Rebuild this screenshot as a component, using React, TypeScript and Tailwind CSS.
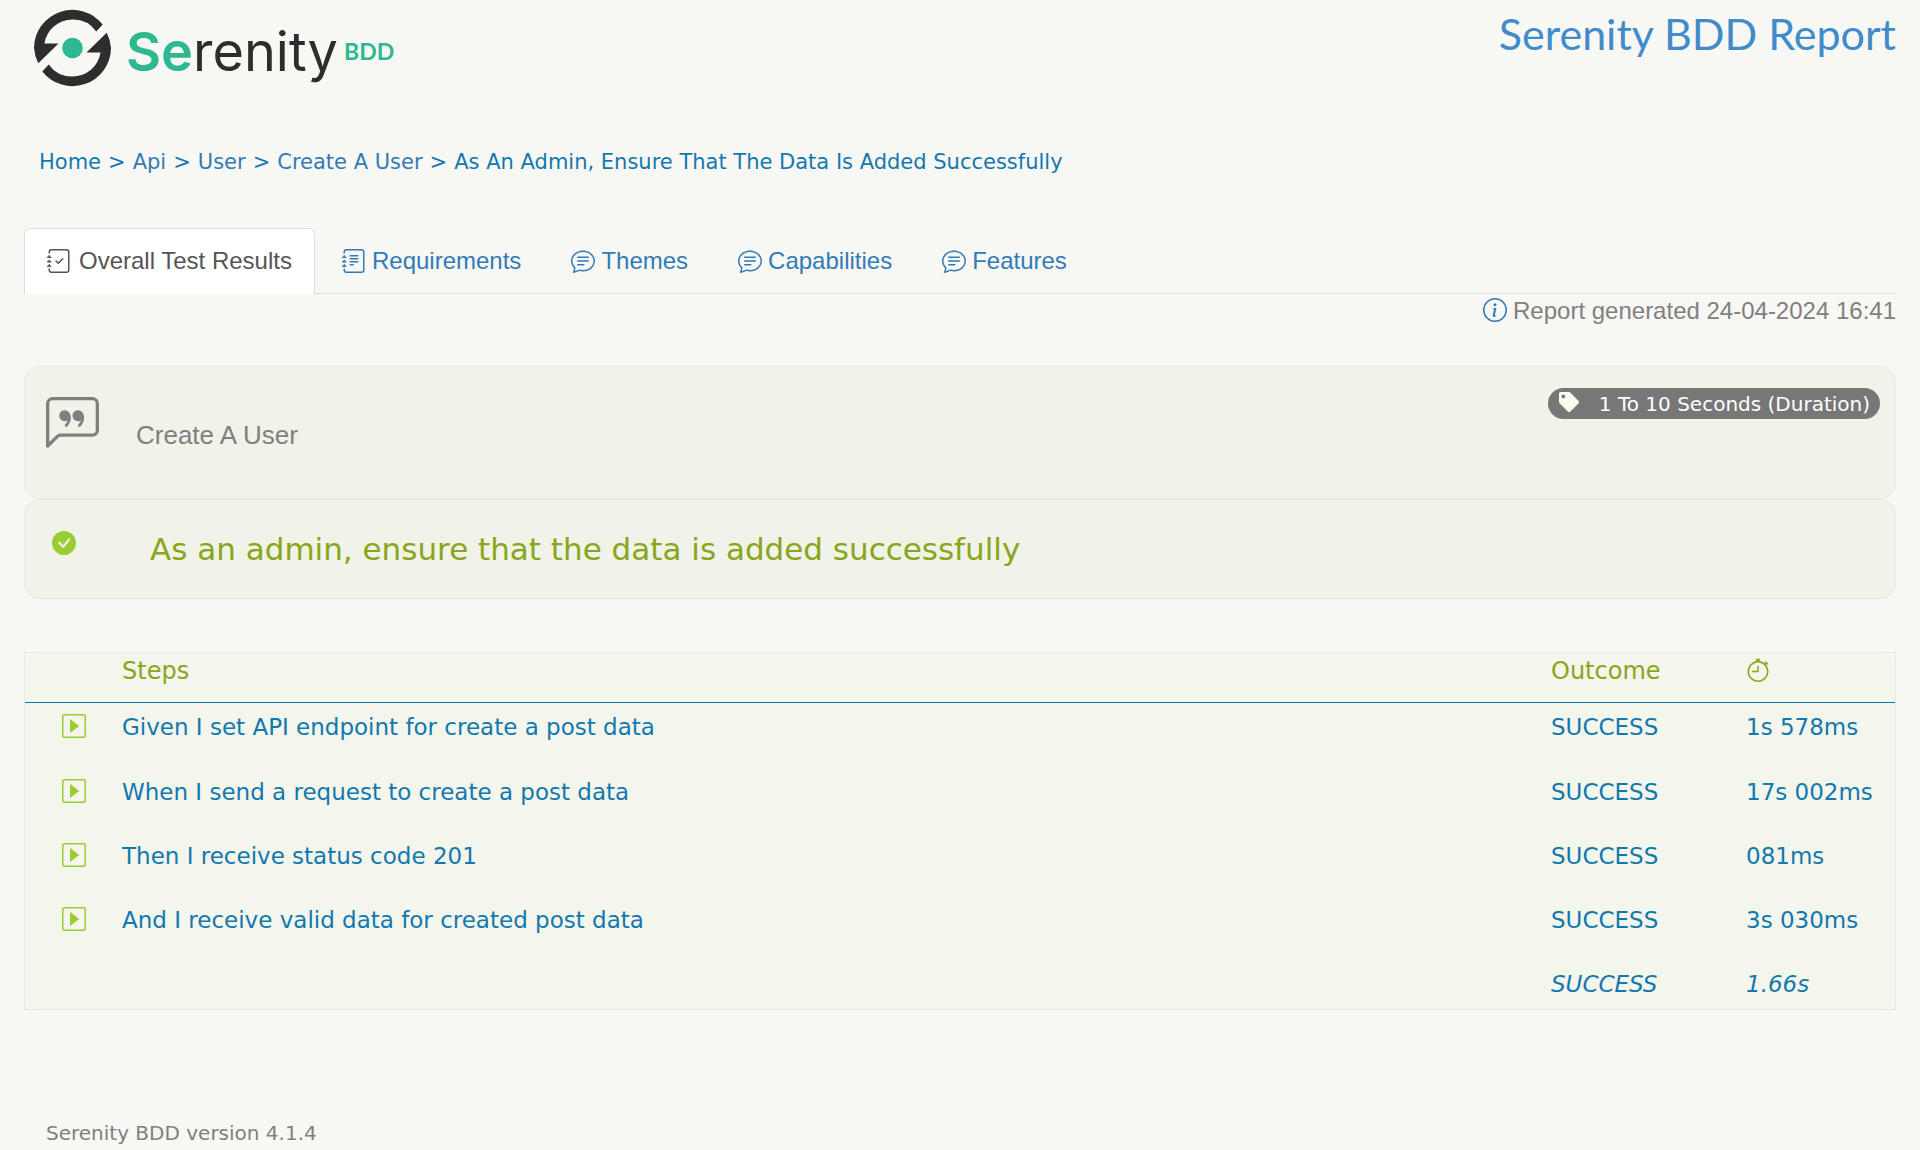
import type { ReactNode } from "react";
import {
  BsChatLeftQuote,
  BsChatText,
  BsCheckCircleFill,
  BsInfoCircle,
  BsJournalCheck,
  BsJournalText,
  BsStopwatch,
} from "react-icons/bs";
import { FaTag } from "react-icons/fa";

const sans = "font-['DejaVu_Sans',sans-serif]";
const arial = "font-['Liberation_Sans',sans-serif]";

const crumbs = ["Home", "Api", "User", "Create A User"];

const steps = [
  { name: "Given I set API endpoint for create a post data", time: "1s 578ms" },
  { name: "When I send a request to create a post data", time: "17s 002ms" },
  { name: "Then I receive status code 201", time: "081ms" },
  { name: "And I receive valid data for created post data", time: "3s 030ms" },
];

const swoosh =
  "M102.7 24.500 A38.500 38.500 0 0 0 34 48 A38.500 38.500 0 0 0 38.300 63.200 L58.500 43.500 H44.400 A28.500 28.500 0 0 1 72.500 19.500 A28.500 28.500 0 0 1 96.300 31.500 Z";

function Logo() {
  return (
    <a href="#" aria-label="Serenity BDD" className="block">
      <svg width="400" height="92" viewBox="0 0 400 92">
        <path fill="#2d2d2d" d={swoosh} />
        <path fill="#2d2d2d" d={swoosh} transform="rotate(180 72.500 48)" />
        <circle cx="72.500" cy="48" r="10.300" fill="#2eb892" />
        <text x="126" y="71" fontFamily="Inter" fontSize="54" fontWeight="600" fill="#2eb892">Se</text>
        <text x="193" y="71" fontFamily="Inter" fontSize="54" fontWeight="400" fill="#2d2d2d">renity</text>
        <text x="344" y="60" fontFamily="Lato" fontSize="23" fontWeight="700" fill="#2eb892">BDD</text>
      </svg>
    </a>
  );
}

function Tab({ icon, children }: { icon: ReactNode; children: ReactNode }) {
  return (
    <a href="#" className="flex items-center gap-1.5 px-[25px] text-[#337ab7]">
      {icon}
      {children}
    </a>
  );
}

function PlayIcon() {
  return (
    <svg width="24" height="24" viewBox="0 0 24 24" className="block">
      <rect x="0.750" y="0.750" width="22.500" height="22.500" rx="1.500" fill="none" stroke="#9acd32" strokeWidth="1.500" />
      <path d="M8 5v14l9.200-7z" fill="#9acd32" />
    </svg>
  );
}

export default function App() {
  return (
    <div className={`min-h-screen bg-[#f7f8f3] px-6 text-[#1278b0] ${sans}`}>
      <header className="flex justify-between">
        <div className="-ml-6 h-[92px]">
          <Logo />
        </div>
        <h1 className="pt-1.5 font-['Lato',sans-serif] text-[43px] leading-[56px] text-[#428bca]">Serenity BDD Report</h1>
      </header>

      <nav aria-label="Breadcrumb" className="mt-14 flex gap-[7px] pl-[15px] text-[21px] leading-7">
        {crumbs.map((c, i) => (
          <span key={c} className="flex gap-[7px]">
            <a href="#" className={i === 0 ? "" : "text-[#337ab7]"}>{c}</a>
            <span>&gt;</span>
          </span>
        ))}
        <span>As An Admin, Ensure That The Data Is Added Successfully</span>
      </nav>

      <nav aria-label="Reports" className={`mt-[52px] flex h-[66px] border-b border-[#dddddd] text-2xl ${arial}`}>
        <a
          href="#"
          aria-current="page"
          className="-mb-px mr-0.5 flex items-center gap-2 rounded-t-md border border-b-0 border-[#dddddd] bg-white px-[22px] pb-0.5 text-[#555555]"
        >
          <BsJournalCheck />
          Overall Test Results
        </a>
        <Tab icon={<BsJournalText />}>Requirements</Tab>
        <Tab icon={<BsChatText />}>Themes</Tab>
        <Tab icon={<BsChatText />}>Capabilities</Tab>
        <Tab icon={<BsChatText />}>Features</Tab>
      </nav>

      <p className={`flex h-[72px] items-start justify-end gap-1.5 pt-px text-2xl text-[#808080] ${arial}`}>
        <BsInfoCircle className="mt-[3px] text-[#337ab7]" />
        Report generated 24-04-2024 16:41
      </p>

      <section className="flex h-[133px] justify-between rounded-2xl border border-[#e7e8e3] bg-[#f1f2e8] pr-[15px] pl-[21px]">
        <h2 className={`flex items-start gap-[37px] text-[26px] text-[#808080] ${arial}`}>
          <BsChatLeftQuote className="mt-[30px] size-[53px]" />
          <span className="mt-[49px]">Create A User</span>
        </h2>
        <a
          href="#"
          className="mt-[21px] flex h-[31px] items-center rounded-full bg-[#777777] pr-2.5 pl-[11px] text-[20px] text-white"
        >
          <FaTag className="mr-5 mb-1 size-5 text-[#fffaf0]" />
          1 To 10 Seconds (Duration)
        </a>
      </section>

      <section className="flex h-[100px] items-start rounded-2xl border border-[#e7e8e3] bg-[#f1f2e8] pl-[27px]">
        <BsCheckCircleFill className="mt-[31px] size-6 text-[#9acd32]" />
        <h2 className="mt-[26px] ml-[74px] text-[31px] leading-[46px] text-[#88a61b]">
          As an admin, ensure that the data is added successfully
        </h2>
      </section>

      <div className="mt-[53px] border border-[#e7e8e3]">
        <table className="w-full table-fixed border-separate border-spacing-0 rounded-xl bg-[#f4f5eb] text-left text-[23px] leading-8">
          <colgroup>
            <col className="w-[97px]" />
            <col />
            <col className="w-[195px]" />
            <col className="w-[149px]" />
          </colgroup>
          <thead className="text-2xl text-[#88a61b]">
            <tr className="h-[50px] align-top">
              <th className="border-b border-[#0f76a3]" aria-label="Details" />
              <th className="border-b border-[#0f76a3] pt-0.5 font-normal">Steps</th>
              <th className="border-b border-[#0f76a3] pt-0.5 font-normal">Outcome</th>
              <th className="border-b border-[#0f76a3] pt-[5px]" aria-label="Duration">
                <BsStopwatch className="size-6" />
              </th>
            </tr>
          </thead>
          <tbody>
            {steps.map((s) => (
              <tr key={s.name} className="h-16 align-top first:h-[65px]">
                <td className="pt-[11px] pl-[37px]">
                  <button type="button" aria-label="Expand step" className="block">
                    <PlayIcon />
                  </button>
                </td>
                <td className="pt-2">{s.name}</td>
                <td className="pt-2">SUCCESS</td>
                <td className="pt-2 whitespace-nowrap">{s.time}</td>
              </tr>
            ))}
          </tbody>
          <tfoot>
            <tr className="h-[49px] align-top italic">
              <td colSpan={2} />
              <td className="pt-2">SUCCESS</td>
              <td className="pt-2">1.66s</td>
            </tr>
          </tfoot>
        </table>
      </div>

      <footer className="pt-[109px] pl-[22px] text-[20px] leading-7 text-[#808080]">Serenity BDD version 4.1.4</footer>
    </div>
  );
}
